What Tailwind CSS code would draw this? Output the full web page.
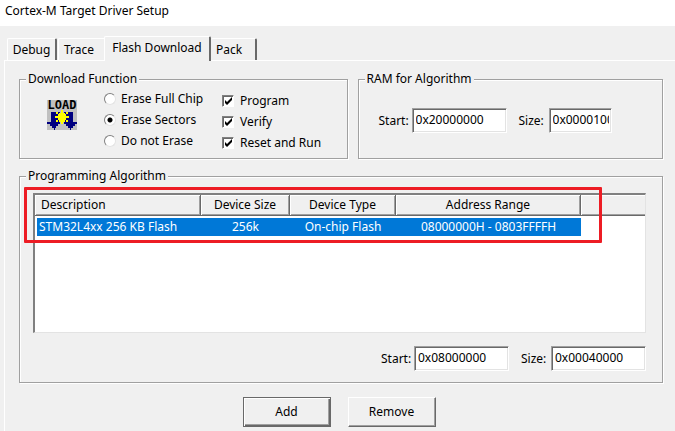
<!DOCTYPE html>
<html lang="en">
<head>
    <meta charset="UTF-8">
    <meta name="viewport" content="width=device-width, initial-scale=1.0">
    <title>Cortex-M Target Driver Setup</title>
    <script src="https://cdn.jsdelivr.net/npm/@tailwindcss/browser@4"></script>
</head>
<body class="min-h-screen bg-[#f0f0f0] font-['Noto_Sans',sans-serif] text-[12px] leading-[18px] text-black">
    <header class="bg-white h-[26px] pl-[5px] pt-[2px]">
        <h1>Cortex-M Target Driver Setup</h1>
    </header>

    <!-- Tabs -->
    <nav class="flex items-end pl-[7px] pt-[10px]">
        <button class="h-[22px] w-[50px] rounded-t-[2px] border-t border-l border-r-2 border-t-white border-l-white border-r-[#696969]">Debug</button>
        <button class="ml-[1px] h-[22px] w-[46px] pr-[5px] rounded-tl-[2px] border-t border-l border-white">Trace</button>
        <button class="relative z-10 -mb-[1px] h-[25px] w-[107px] pb-[3px] rounded-t-[2px] border-t border-l border-r-2 border-t-white border-l-white border-r-[#696969] bg-[#f0f0f0]">Flash Download</button>
        <button class="h-[22px] w-[46px] pr-[8px] rounded-t-[2px] border-t border-r-2 border-t-white border-r-[#696969]">Pack</button>
    </nav>

    <main class="ml-[4px] border-t border-l border-white pl-[14px] pr-[12px] pt-[9px] pb-[4px]">
        <div class="grid grid-cols-[328fr_305fr] gap-[10px]">
            <!-- Download Function -->
            <fieldset class="min-w-0 h-[89px] border border-[#a0a0a0] shadow-[1px_1px_#fff,inset_1px_1px_#fff]">
                <legend class="ml-[6px] px-[2px] bg-[#f0f0f0]">Download Function</legend>
                <div class="flex pl-[27px]">
                    <svg class="mt-[10px] w-[30px] h-[32px] shrink-0" viewBox="0 0 30 32" shape-rendering="crispEdges">
                        <rect x="0" y="2" width="30" height="30" fill="#c0c0c0"/>
                        <path d="M4 14h9v11h-2v-1h2v2h-2v2h-2v2h-1v2h-1v-2h-2v-2h-2v-2h-3v-2h4zM17 14h9v10h4v2h-2v2h-2v2h-2v2h-1v-2h-2v-2h-2v-2h-2z" fill="#000080"/>
                        <path d="M14 12h2v3h2v1h1v-2h2v2h-2v2h3v2h-3v2h2v2h-2v-2h-1v2h-2v2h-2v-2h-2v-2h-1v2h-2v-2h2v-2h-3v-2h3v-2h-2v-2h2v2h1v-1h2z" fill="#ffff00"/>
                        <text x="15" y="11" text-anchor="middle" font-family="DejaVu Sans Mono, monospace" font-weight="bold" font-size="12" fill="#000">LOAD</text>
                    </svg>
                    <div class="ml-[27px] w-[118px] flex flex-col">
                        <label class="flex items-center gap-[5px] h-[21px]"><input type="radio" name="erase" class="appearance-none w-[12px] h-[12px] rounded-full bg-white border border-t-[#808080] border-l-[#808080] border-r-[#e3e3e3] border-b-[#e3e3e3]">Erase Full Chip</label>
                        <label class="flex items-center gap-[5px] h-[21px]"><input type="radio" name="erase" checked class="appearance-none w-[12px] h-[12px] rounded-full bg-[radial-gradient(circle,#000_2px,#fff_3px)] border border-t-[#808080] border-l-[#808080] border-r-[#e3e3e3] border-b-[#e3e3e3]">Erase Sectors</label>
                        <label class="flex items-center gap-[5px] h-[21px]"><input type="radio" name="erase" class="appearance-none w-[12px] h-[12px] rounded-full bg-white border border-t-[#808080] border-l-[#808080] border-r-[#e3e3e3] border-b-[#e3e3e3]">Do not Erase</label>
                    </div>
                    <div class="pt-[2px] flex flex-col">
                        <label class="flex items-center gap-[6px] h-[21px]">
                            <span class="grid w-[12px] h-[12px]">
                                <input type="checkbox" checked class="col-start-1 row-start-1 appearance-none w-[12px] h-[12px] bg-white border border-t-[#808080] border-l-[#808080] border-r-white border-b-white shadow-[inset_1px_1px_#696969]">
                                <svg class="col-start-1 row-start-1 pointer-events-none" viewBox="0 0 12 12"><path d="M3 5v3l2 2 5-5V2L5 7z"/></svg>
                            </span>Program
                        </label>
                        <label class="flex items-center gap-[6px] h-[21px]">
                            <span class="grid w-[12px] h-[12px]">
                                <input type="checkbox" checked class="col-start-1 row-start-1 appearance-none w-[12px] h-[12px] bg-white border border-t-[#808080] border-l-[#808080] border-r-white border-b-white shadow-[inset_1px_1px_#696969]">
                                <svg class="col-start-1 row-start-1 pointer-events-none" viewBox="0 0 12 12"><path d="M3 5v3l2 2 5-5V2L5 7z"/></svg>
                            </span>Verify
                        </label>
                        <label class="flex items-center gap-[6px] h-[21px]">
                            <span class="grid w-[12px] h-[12px]">
                                <input type="checkbox" checked class="col-start-1 row-start-1 appearance-none w-[12px] h-[12px] bg-white border border-t-[#808080] border-l-[#808080] border-r-white border-b-white shadow-[inset_1px_1px_#696969]">
                                <svg class="col-start-1 row-start-1 pointer-events-none" viewBox="0 0 12 12"><path d="M3 5v3l2 2 5-5V2L5 7z"/></svg>
                            </span>Reset and Run
                        </label>
                    </div>
                </div>
            </fieldset>

            <!-- RAM for Algorithm -->
            <fieldset class="min-w-0 h-[89px] border border-[#a0a0a0] shadow-[1px_1px_#fff,inset_1px_1px_#fff]">
                <legend class="ml-[6px] px-[2px] bg-[#f0f0f0]">RAM for Algorithm</legend>
                <div class="flex items-center pl-[20px] pt-[20px]">
                    <label for="ram-start" class="w-[33px]">Start:</label>
                    <input id="ram-start" type="text" value="0x20000000" class="w-[95px] h-[25px] pl-[3px] pb-[2px] bg-white border border-t-[#a0a0a0] border-l-[#a0a0a0] border-r-white border-b-white shadow-[inset_1px_1px_#696969,inset_-1px_-1px_#e3e3e3]">
                    <label for="ram-size" class="ml-[12px] w-[30px]">Size:</label>
                    <input id="ram-size" type="text" value="0x00001000" class="w-[63px] h-[25px] pl-[3px] pr-[2px] pb-[2px] bg-white border border-t-[#a0a0a0] border-l-[#a0a0a0] border-r-white border-b-white shadow-[inset_1px_1px_#696969,inset_-1px_-1px_#e3e3e3]">
                </div>
            </fieldset>
        </div>

        <!-- Programming Algorithm -->
        <fieldset class="relative mt-[8px] min-w-0 h-[216px] border border-[#a0a0a0] shadow-[1px_1px_#fff,inset_1px_1px_#fff]">
            <legend class="ml-[6px] px-[2px] bg-[#f0f0f0]">Programming Algorithm</legend>
            <div class="ml-[13px] mr-[16px] mt-[8px] h-[140px] bg-white border-t-2 border-l-2 border-r border-b border-t-[#808080] border-l-[#808080] border-r-[#e3e3e3] border-b-[#e3e3e3]">
                <table class="w-full table-fixed border-separate border-spacing-0">
                    <thead>
                        <tr class="h-[21px] bg-[#f0f0f0]">
                            <th class="w-[166px] pl-[6px] text-left font-normal border-r border-b border-[#696969] shadow-[inset_1px_1px_#fff,inset_-1px_-1px_#a0a0a0]">Description</th>
                            <th class="w-[89px] font-normal border-r border-b border-[#696969] shadow-[inset_1px_1px_#fff,inset_-1px_-1px_#a0a0a0]">Device Size</th>
                            <th class="w-[106px] font-normal border-r border-b border-[#696969] shadow-[inset_1px_1px_#fff,inset_-1px_-1px_#a0a0a0]">Device Type</th>
                            <th class="w-[185px] font-normal border-r border-b border-[#696969] shadow-[inset_1px_1px_#fff,inset_-1px_-1px_#a0a0a0]">Address Range</th>
                            <th class="border-b border-[#696969] shadow-[inset_1px_1px_#fff,inset_0_-1px_#a0a0a0]"></th>
                        </tr>
                    </thead>
                    <tbody>
                        <tr class="h-[20px] text-center text-white">
                            <td class="pl-[2px] text-left whitespace-nowrap bg-[#0078d7] border-t-2 border-l-2 border-white">STM32L4xx 256 KB Flash</td>
                            <td class="bg-[#0078d7] border-t-2 border-white">256k</td>
                            <td class="bg-[#0078d7] border-t-2 border-white">On-chip Flash</td>
                            <td class="bg-[#0078d7] border-t-2 border-white">08000000H - 0803FFFFH</td>
                            <td></td>
                        </tr>
                    </tbody>
                </table>
            </div>
            <div class="flex items-center justify-end mr-[16px] mt-[13px]">
                <label for="alg-start" class="w-[33px]">Start:</label>
                <input id="alg-start" type="text" value="0x08000000" class="w-[95px] h-[25px] pl-[3px] pb-[2px] bg-white border border-t-[#a0a0a0] border-l-[#a0a0a0] border-r-white border-b-white shadow-[inset_1px_1px_#696969,inset_-1px_-1px_#e3e3e3]">
                <label for="alg-size" class="ml-[12px] w-[30px]">Size:</label>
                <input id="alg-size" type="text" value="0x00040000" class="w-[95px] h-[25px] pl-[3px] pb-[2px] bg-white border border-t-[#a0a0a0] border-l-[#a0a0a0] border-r-white border-b-white shadow-[inset_1px_1px_#696969,inset_-1px_-1px_#e3e3e3]">
            </div>
            <!-- highlight frame -->
            <div class="absolute left-[4px] right-[60px] top-[2px] h-[56px] rounded-[1px] border-3 border-[#ed1c24] pointer-events-none"></div>
        </fieldset>

        <div class="flex justify-center gap-[17px] mt-[14px] pr-[4px]">
            <button class="w-[88px] h-[30px] border border-[#696969] shadow-[inset_1px_1px_#fff,inset_-1px_-1px_#696969,inset_-2px_-2px_#a0a0a0]">Add</button>
            <button class="w-[88px] h-[30px] border border-t-white border-l-white border-r-[#696969] border-b-[#696969] shadow-[inset_-1px_-1px_#a0a0a0]">Remove</button>
        </div>
    </main>
</body>
</html>
